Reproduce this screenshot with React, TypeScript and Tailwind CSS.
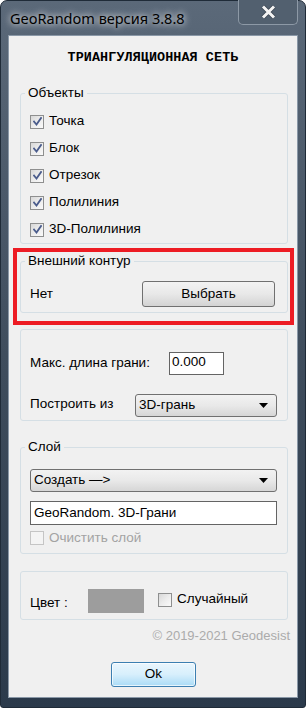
import React from "react";

const ui = "font-['Liberation_Sans',Arial,sans-serif] text-[13.5px] text-black";

function CheckMark({ disabled }: { disabled?: boolean }) {
  return (
    <svg width="9" height="9" viewBox="0 0 9 9" className={disabled ? "hidden" : ""}>
      <path d="M1 4.5 L3.5 7.5 L8 1" fill="none" stroke="#4a5c8c" strokeWidth="1.8" strokeLinecap="square" />
    </svg>
  );
}

function CheckBox({ label, checked, disabled }: { label: string; checked?: boolean; disabled?: boolean }) {
  return (
    <div className="flex items-center h-full">
      <div
        className={`w-[14px] h-[14px] border flex items-center justify-center shrink-0 ${
          disabled
            ? "border-[#c5c5c5] bg-[#f4f4f4]"
            : "border-[#8e8f8f] bg-gradient-to-br from-[#d8d8d8] via-[#ececec] to-[#fafafa]"
        }`}
      >
        {checked && <CheckMark disabled={disabled} />}
      </div>
      <span className={`ml-[5px] ${disabled ? "text-[#a3a3a3]" : ""}`}>{label}</span>
    </div>
  );
}

function GroupBox({
  title,
  className,
  children,
}: {
  title?: string;
  className: string;
  children: React.ReactNode;
}) {
  return (
    <div className={`relative border border-[#d5dfe5] rounded-[3px] ${className}`}>
      {title && (
        <span className="absolute -top-[9px] left-[4px] px-[3px] bg-[#f0f0f0] leading-[16px]">{title}</span>
      )}
      {children}
    </div>
  );
}

function Combo({ value, className }: { value: string; className: string }) {
  return (
    <div
      className={`flex items-center justify-between border border-[#707070] rounded-[3px] bg-gradient-to-b from-[#f2f2f2] via-[#e9e9e9] to-[#d6d6d6] pl-[3px] pr-[8px] ${className}`}
    >
      <span>{value}</span>
      <svg width="9" height="5" viewBox="0 0 9 5">
        <path d="M0 0 H9 L4.5 5 Z" fill="#000" />
      </svg>
    </div>
  );
}

export default function App() {
  return (
    <div className="w-[306px] h-[708px] bg-[#ffffff]">
      <div className="w-[306px] h-[708px] rounded-t-[7px] rounded-b-[3px] border border-[#1f2b38] bg-gradient-to-b from-[#5b6979] via-[#3f4d5d] to-[#2b3a4b] flex flex-col">
        {/* title bar */}
        <div className="h-[34px] flex items-start justify-between">
          <span className="ml-[9px] mt-[7px] font-['Noto_Sans',sans-serif] text-[14.5px] leading-[20px] text-black [text-shadow:0_0_6px_rgba(255,255,255,0.85),0_0_10px_rgba(255,255,255,0.6)]">
            GeoRandom версия 3.8.8
          </span>
          <div className="-mt-px mr-[7px] w-[60px] h-[25px] border border-t-0 border-[#8d99a6] rounded-b-[5px] bg-[#52606f] flex items-center justify-center">
            <svg width="15" height="14" viewBox="0 0 15 14">
              <path d="M2 1.5 L13 12.5 M13 1.5 L2 12.5" stroke="#3a4450" strokeWidth="4.4" />
              <path d="M2 1.5 L13 12.5 M13 1.5 L2 12.5" stroke="#f4f4f4" strokeWidth="3" />
            </svg>
          </div>
        </div>

        {/* client area */}
        <div className={`ml-[7px] w-[290px] h-[663px] bg-[#f0f0f0] border border-[#8a98a7] flex flex-col ${ui}`}>
          <div className="mt-[14px] h-[16px] text-center font-['Liberation_Mono',monospace] font-bold text-[13.4px] leading-[16px] tracking-[0.1px]">
            ТРИАНГУЛЯЦИОННАЯ СЕТЬ
          </div>

          <GroupBox title="Объекты" className="mt-[27px] ml-[11px] w-[268px] h-[151px] pt-[14px] pl-[9px]">
            {["Точка", "Блок", "Отрезок", "Полилиния", "3D-Полилиния"].map((t) => (
              <div key={t} className="h-[27px]">
                <CheckBox label={t} checked />
              </div>
            ))}
          </GroupBox>

          <div className="mt-[4px] ml-[4px] w-[281px] h-[77px] border-4 border-[#ed1c24] pt-[9px] pl-[3px]">
            <GroupBox title="Внешний контур" className="w-[268px] h-[52px] pt-[19px] pl-[9px] pr-[12px]">
              <div className="flex items-center justify-between h-[26px]">
                <span>Нет</span>
                <div className="w-[133px] h-[26px] border border-[#707070] rounded-[3px] bg-gradient-to-b from-[#f3f3f3] via-[#e8e8e8] to-[#d3d3d3] flex items-center justify-center">
                  Выбрать
                </div>
              </div>
            </GroupBox>
          </div>

          <GroupBox className="mt-[4px] ml-[11px] w-[268px] h-[92px] pt-[22px] pl-[9px]">
            <div className="flex items-center h-[23px]">
              <span className="w-[139px]">Макс. длина грани:</span>
              <div className="w-[55px] h-[23px] border border-[#646464] bg-white pl-[2px] leading-[18px]">0.000</div>
            </div>
            <div className="flex items-center h-[23px] mt-[19px]">
              <span className="w-[105px] -mt-[2px]">Построить из</span>
              <Combo value="3D-грань" className="w-[142px] h-[23px]" />
            </div>
          </GroupBox>

          <GroupBox title="Слой" className="mt-[26px] ml-[11px] w-[268px] h-[107px] pt-[21px] pl-[9px]">
            <Combo value="Создать —>" className="w-[247px] h-[23px]" />
            <div className="mt-[9px] w-[247px] h-[24px] border border-[#646464] bg-white pl-[3px] flex items-center">
              GeoRandom. 3D-Грани
            </div>
            <div className="mt-[6px] h-[14px]">
              <CheckBox label="Очистить слой" disabled />
            </div>
          </GroupBox>

          <GroupBox className="mt-[17px] ml-[11px] w-[268px] h-[49px] pt-[17px] pl-[9px]">
            <div className="flex items-center h-[24px]">
              <span className="w-[58px] mt-[4px]">Цвет :</span>
              <div className="w-[56px] h-[24px] bg-[#9d9d9d]" />
              <div className="ml-[14px] -mt-[3px]">
                <CheckBox label="Случайный" />
              </div>
            </div>
          </GroupBox>

          <div className="mt-[8px] w-[281px] text-right text-[#ababab] leading-[16px] text-[13px]">© 2019-2021 Geodesist</div>

          <div className="mt-[18px] self-center ml-[1px] w-[85px] h-[25px] rounded-[3px] border border-[#3c7fb1] bg-gradient-to-b from-[#eaf6fd] via-[#d7effc] to-[#a9dbf6] shadow-[inset_0_0_0_1px_rgba(255,255,255,0.7)] flex items-center justify-center">
            Ok
          </div>
        </div>
      </div>
    </div>
  );
}
